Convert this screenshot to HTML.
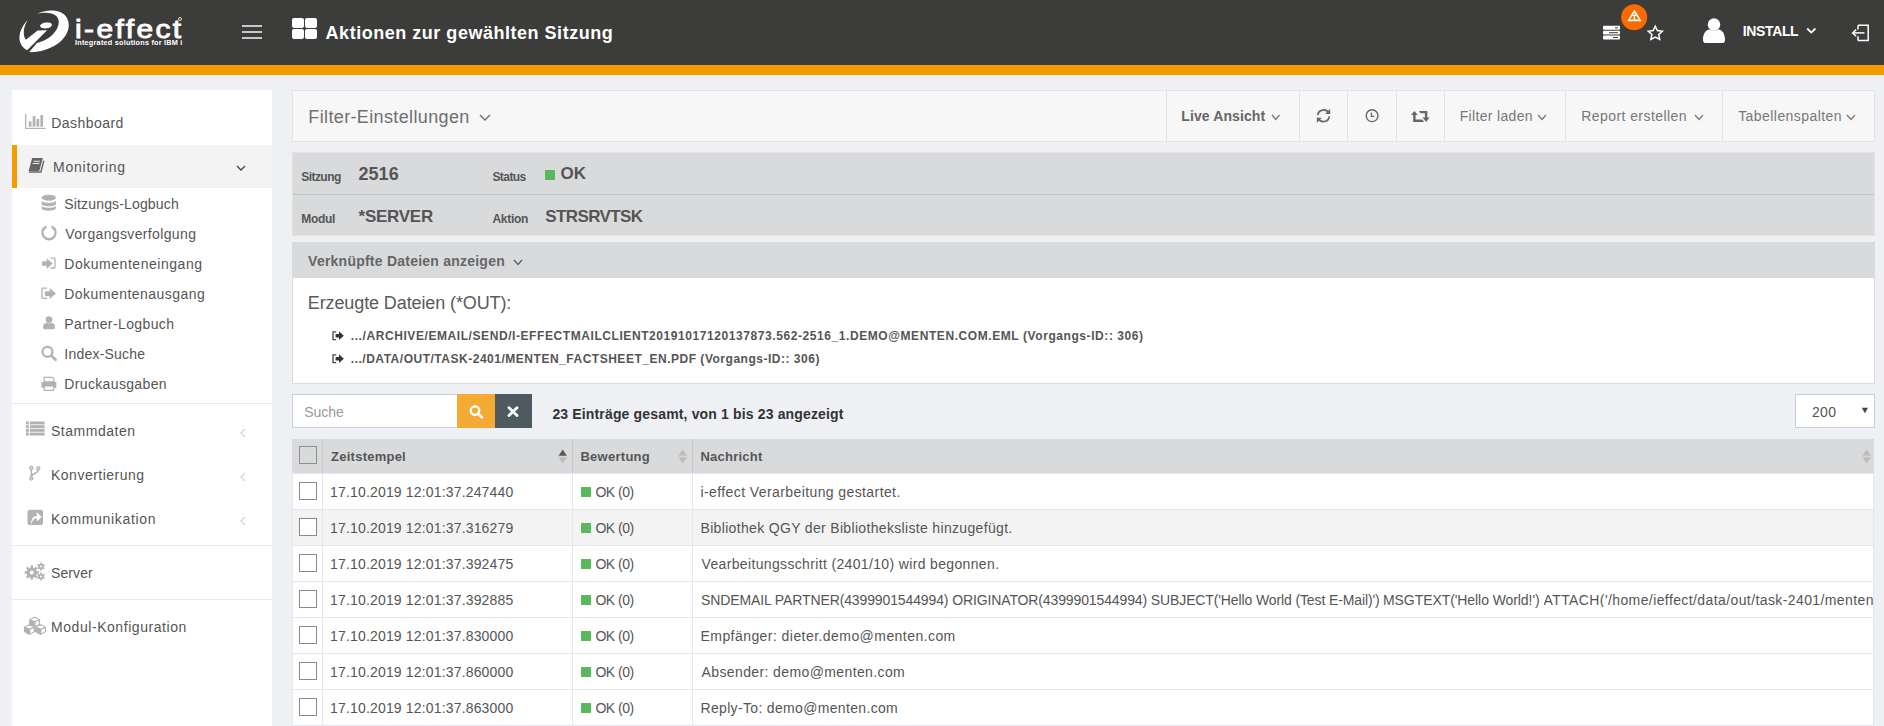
<!DOCTYPE html>
<html><head><meta charset="utf-8"><style>
*{box-sizing:border-box;margin:0;padding:0}
html,body{width:1884px;height:726px;overflow:hidden;background:#eef0f4;font-family:"Liberation Sans",sans-serif;color:#555;position:relative}
.r{position:absolute}
.tx{position:absolute;white-space:nowrap}
svg{position:absolute;overflow:visible}
</style></head><body>
<div class="r" style="left:0px;top:0px;width:1884px;height:65px;background:#3c3c3b"></div>
<div class="r" style="left:0px;top:65px;width:1884px;height:10px;background:#f39c00"></div>
<svg style="left:15px;top:5px" width="60" height="53" viewBox="0 0 822 726"><g fill="#fff"><path d="M300,120 C430,55 650,45 715,185 C780,320 690,480 530,565 C420,625 300,650 195,645 L300,520 C420,490 560,410 595,270 C625,150 520,70 300,120 Z"/><path d="M175,205 C95,280 45,400 65,490 C80,560 130,605 170,618 L440,345 L310,350 L150,475 C105,420 110,300 175,205 Z"/><ellipse cx="425" cy="280" rx="82" ry="40" transform="rotate(-8 425 280)"/></g></svg>
<div class="r" style="left:242px;top:25px;width:20px;height:2px;background:#c8c8c8"></div>
<div class="r" style="left:242px;top:31px;width:20px;height:2px;background:#c8c8c8"></div>
<div class="r" style="left:242px;top:37px;width:20px;height:2px;background:#c8c8c8"></div>
<div class="r" style="left:292px;top:18px;width:12px;height:10px;background:#fff;border-radius:2px"></div>
<div class="r" style="left:305px;top:18px;width:12px;height:10px;background:#fff;border-radius:2px"></div>
<div class="r" style="left:292px;top:29px;width:12px;height:10px;background:#fff;border-radius:2px"></div>
<div class="r" style="left:305px;top:29px;width:12px;height:10px;background:#fff;border-radius:2px"></div>
<svg style="left:1603px;top:25px" width="18" height="15" viewBox="0 0 18 15"><g fill="#fff"><rect x="0" y="0.8" width="17" height="4" rx="0.8"/><rect x="0" y="5.8" width="17" height="3.6" rx="0.8"/><rect x="0" y="10.4" width="17" height="4" rx="0.8"/></g><g fill="#3c3c3b"><rect x="12" y="2.3" width="3" height="1"/><rect x="6" y="7.2" width="9" height="1"/><rect x="10" y="12" width="5" height="1"/></g></svg>
<svg style="left:1620px;top:3px" width="30" height="29" viewBox="0 0 30 29"><circle cx="14.2" cy="14.3" r="13" fill="#ff6a00"/><path d="M14.4,6.6 L21.6,18.2 L7.2,18.2 Z" fill="#fff"/><path d="M14.4,10 L19,16.5 L9.8,16.5 Z" fill="#ff6a00"/><rect x="13.7" y="12.2" width="1.5" height="5" fill="#fff"/><rect x="12.6" y="11.8" width="3.7" height="1.2" fill="#fff"/></svg>
<svg style="left:1647px;top:25px" width="17" height="16" viewBox="0 0 17 16"><path d="M8.3,1.2 L10.4,5.6 L15.3,6.2 L11.7,9.5 L12.7,14.4 L8.3,12 L3.9,14.4 L4.9,9.5 L1.3,6.2 L6.2,5.6 Z" fill="none" stroke="#fff" stroke-width="1.5" stroke-linejoin="miter"/></svg>
<svg style="left:1702px;top:18px" width="24" height="26" viewBox="0 0 24 26"><g fill="#fff"><circle cx="12" cy="6.6" r="6.3"/><path d="M1,22 C1,15 4,12 7.5,11.5 C9,13 15,13 16.5,11.5 C20,12 23,15 23,22 C23,24.5 21.5,25 20,25 L4,25 C2.5,25 1,24.5 1,22 Z"/></g></svg>
<svg style="left:1806px;top:27px" width="11" height="8" viewBox="0 0 11 8"><path d="M1.2,1.5 L5.3,5.6 L9.4,1.5" fill="none" stroke="#fff" stroke-width="1.8"/></svg>
<svg style="left:1851px;top:24px" width="19" height="18" viewBox="0 0 19 18"><g fill="none" stroke="#fff" stroke-width="1.5"><path d="M7,1.3 L17.2,1.3 L17.2,16.4 L7,16.4"/><path d="M7,1.3 L7,5.5 M7,12.2 L7,16.4"/><path d="M2,8.9 L13.5,8.9"/><path d="M5.2,5.6 L1.6,8.9 L5.2,12.2"/></g></svg>
<div class="r" style="left:12px;top:90px;width:260px;height:640px;background:#fff"></div>
<div class="r" style="left:12px;top:145px;width:260px;height:43px;background:#f3f3f3"></div>
<div class="r" style="left:12px;top:145px;width:5px;height:43px;background:#f39c00"></div>
<div class="r" style="left:17px;top:145px;width:1px;height:43px;background:#f8f8f8"></div>
<div class="r" style="left:12px;top:403px;width:260px;height:1px;background:#e9e9e9"></div>
<div class="r" style="left:12px;top:545px;width:260px;height:1px;background:#e9e9e9"></div>
<div class="r" style="left:12px;top:599px;width:260px;height:1px;background:#e9e9e9"></div>
<svg style="left:25px;top:114px" width="21" height="15" viewBox="0 0 21 15"><g fill="#b2b2b2"><rect x="0" y="0" width="1.3" height="15"/><rect x="0" y="13.8" width="20.6" height="1.2"/><rect x="3.8" y="7.3" width="2.7" height="5.4"/><rect x="7.7" y="2.1" width="2.7" height="10.6"/><rect x="11.5" y="4.9" width="2.7" height="7.8"/><rect x="15.4" y="1.0" width="2.7" height="11.7"/></g></svg>
<svg style="left:20px;top:150px" width="30" height="30" viewBox="0 0 30 30"><path d="M12.2,7.9 L22.8,7.9 L19.8,19.6 C19.5,20.5 19,20.9 18.2,20.9 L8.6,20.9 Z" fill="#666"/><path d="M23.9,10.6 L20.9,22 L8.9,22" fill="none" stroke="#666" stroke-width="1.4"/><path d="M13.6,11.2 L19.9,11.2 M12.6,13.5 L19.4,13.5" stroke="#e8e8e8" stroke-width="1.1"/></svg>
<svg style="left:236px;top:165px" width="11" height="7" viewBox="0 0 11 7"><path d="M1,1 L5,5 L9,1" fill="none" stroke="#444" stroke-width="1.3"/></svg>
<svg style="left:41px;top:194px" width="16" height="17" viewBox="0 0 16 17"><g fill="#b2b2b2"><ellipse cx="7.8" cy="3.7" rx="7.1" ry="3"/><path d="M0.7,6.2 C0.7,9.6 14.9,9.6 14.9,6.2 L14.9,10 C14.9,13 0.7,13 0.7,10 Z"/><path d="M0.7,11.6 C0.7,14.6 14.9,14.6 14.9,11.6 L14.9,14 C14.9,17.6 0.7,17.6 0.7,14 Z"/></g></svg>
<svg style="left:41px;top:225px" width="16" height="16" viewBox="0 0 16 16"><path d="M10.6,1.6 A6.6,6.6 0 1 1 5.4,1.6" fill="none" stroke="#b2b2b2" stroke-width="2.3"/></svg>
<svg style="left:38px;top:252px" width="22" height="50" viewBox="0 0 22 50"><g fill="#b2b2b2"><rect x="4.1" y="9.3" width="5" height="4.5"/><path d="M8.6,6.2 L14.8,11.5 L8.6,16.9 Z"/><rect x="6.9" y="39.3" width="5.2" height="4.8"/><path d="M11.7,35.9 L17.9,41.4 L11.7,46.9 Z"/></g><g fill="none" stroke="#b2b2b2" stroke-width="1.3"><path d="M12.4,6.1 L16.3,6.1 Q17,6.1 17,6.8 L17,15.3 Q17,16 16.3,16 L12.4,16"/><path d="M9,36.1 L4.7,36.1 Q4,36.1 4,36.8 L4,45.6 Q4,46.3 4.7,46.3 L9,46.3"/></g></svg>
<svg style="left:42px;top:316px" width="15" height="14" viewBox="0 0 15 14"><g fill="#b2b2b2"><circle cx="7" cy="3.6" r="3.4"/><path d="M1,11.5 C1,8.5 2.6,7 4.5,6.8 C5.5,7.6 8.5,7.6 9.5,6.8 C11.4,7 13,8.5 13,11.5 C13,12.6 12.4,13.2 11.4,13.2 L2.6,13.2 C1.6,13.2 1,12.6 1,11.5 Z"/></g></svg>
<svg style="left:41px;top:345px" width="16" height="17" viewBox="0 0 16 17"><circle cx="6.5" cy="6.8" r="5" fill="none" stroke="#b2b2b2" stroke-width="2.2"/><path d="M10.3,10.6 L14.6,14.8" stroke="#b2b2b2" stroke-width="2.6" stroke-linecap="round"/></svg>
<svg style="left:41px;top:377px" width="16" height="14" viewBox="0 0 16 14"><g fill="#b2b2b2"><path d="M3.2,0.4 L11.5,0.4 L13,2 L13,5 L3.2,5 Z" fill="none" stroke="#b2b2b2" stroke-width="1.3"/><rect x="0.4" y="5" width="15" height="6" rx="1.2"/><rect x="3.2" y="9" width="9.5" height="4.4" fill="#fff" stroke="#b2b2b2" stroke-width="1.2"/></g></svg>
<svg style="left:26px;top:421px" width="19" height="16" viewBox="0 0 19 16"><g fill="#b2b2b2"><rect x="0" y="0.5" width="2.9" height="2.9"/><rect x="3.9" y="0.5" width="14.7" height="2.9"/><rect x="0" y="4.2" width="2.9" height="2.9"/><rect x="3.9" y="4.2" width="14.7" height="2.9"/><rect x="0" y="7.9" width="2.9" height="2.9"/><rect x="3.9" y="7.9" width="14.7" height="2.9"/><rect x="0" y="11.6" width="2.9" height="2.9"/><rect x="3.9" y="11.6" width="14.7" height="2.9"/></g></svg>
<svg style="left:29px;top:466px" width="12" height="15" viewBox="0 0 12 15"><g fill="none" stroke="#b2b2b2" stroke-width="1.5"><circle cx="2.3" cy="2" r="1.4"/><circle cx="9.3" cy="2.5" r="1.4"/><circle cx="2.3" cy="12.6" r="1.4"/><path d="M2.3,3.4 L2.3,11.2"/><path d="M9.3,3.9 C9.3,7.5 2.6,7 2.4,10.8"/></g></svg>
<svg style="left:27px;top:509px" width="17" height="17" viewBox="0 0 17 17"><rect x="0.5" y="0.8" width="15.5" height="15.2" rx="2.6" fill="#b2b2b2"/><path d="M4.3,15.6 C3.6,10.2 6.3,6.9 9.8,6.9 L9.8,3 L14.6,7.9 L9.8,12.5 L9.8,9.3 C7.4,9.3 5.4,11.2 4.3,15.6 Z" fill="#fff"/></svg>
<svg style="left:25px;top:562px" width="21" height="19" viewBox="0 0 21 19"><g fill="#b2b2b2"><circle cx="6.8" cy="10.5" r="5.2"/><rect x="5.6" y="3.3" width="2.4" height="2.6" transform="rotate(0 6.8 10.5)"/><rect x="5.6" y="3.3" width="2.4" height="2.6" transform="rotate(45 6.8 10.5)"/><rect x="5.6" y="3.3" width="2.4" height="2.6" transform="rotate(90 6.8 10.5)"/><rect x="5.6" y="3.3" width="2.4" height="2.6" transform="rotate(135 6.8 10.5)"/><rect x="5.6" y="3.3" width="2.4" height="2.6" transform="rotate(180 6.8 10.5)"/><rect x="5.6" y="3.3" width="2.4" height="2.6" transform="rotate(225 6.8 10.5)"/><rect x="5.6" y="3.3" width="2.4" height="2.6" transform="rotate(270 6.8 10.5)"/><rect x="5.6" y="3.3" width="2.4" height="2.6" transform="rotate(315 6.8 10.5)"/><circle cx="16" cy="4.6" r="2.8"/><rect x="15.2" y="0.5" width="1.6" height="1.6" transform="rotate(0 16 4.6)"/><rect x="15.2" y="0.5" width="1.6" height="1.6" transform="rotate(60 16 4.6)"/><rect x="15.2" y="0.5" width="1.6" height="1.6" transform="rotate(120 16 4.6)"/><rect x="15.2" y="0.5" width="1.6" height="1.6" transform="rotate(180 16 4.6)"/><rect x="15.2" y="0.5" width="1.6" height="1.6" transform="rotate(240 16 4.6)"/><rect x="15.2" y="0.5" width="1.6" height="1.6" transform="rotate(300 16 4.6)"/><circle cx="16" cy="14.5" r="2.8"/><rect x="15.2" y="10.4" width="1.6" height="1.6" transform="rotate(0 16 14.5)"/><rect x="15.2" y="10.4" width="1.6" height="1.6" transform="rotate(60 16 14.5)"/><rect x="15.2" y="10.4" width="1.6" height="1.6" transform="rotate(120 16 14.5)"/><rect x="15.2" y="10.4" width="1.6" height="1.6" transform="rotate(180 16 14.5)"/><rect x="15.2" y="10.4" width="1.6" height="1.6" transform="rotate(240 16 14.5)"/><rect x="15.2" y="10.4" width="1.6" height="1.6" transform="rotate(300 16 14.5)"/></g><circle cx="6.8" cy="10.5" r="1.9" fill="#fff"/><circle cx="16" cy="4.6" r="1" fill="#fff"/><circle cx="16" cy="14.5" r="1" fill="#fff"/></svg>
<svg style="left:20px;top:612px" width="30" height="26" viewBox="0 0 30 26"><path d="M14.6,4.6 L20.1,7.3999999999999995 L20.1,12.600000000000001 L14.6,15.4 L9.1,12.600000000000001 L9.1,7.3999999999999995 Z" fill="#b2b2b2"/><path d="M14.6,6.0 L18.5,7.3999999999999995 L14.6,8.899999999999999 L10.7,7.3999999999999995 Z" fill="#fff"/><path d="M15.5,10.0 L18.900000000000002,8.799999999999999 L18.900000000000002,12.000000000000002 L15.5,13.9 Z" fill="#fff"/><path d="M9.4,12.1 L14.9,14.899999999999999 L14.9,20.099999999999998 L9.4,22.9 L3.9,20.099999999999998 L3.9,14.899999999999999 Z" fill="#b2b2b2"/><path d="M9.4,13.5 L13.3,14.899999999999999 L9.4,16.4 L5.5,14.899999999999999 Z" fill="#fff"/><path d="M10.3,17.5 L13.700000000000001,16.299999999999997 L13.700000000000001,19.499999999999996 L10.3,21.4 Z" fill="#fff"/><path d="M20.5,12.1 L26,14.899999999999999 L26,20.099999999999998 L20.5,22.9 L15,20.099999999999998 L15,14.899999999999999 Z" fill="#b2b2b2"/><path d="M20.5,13.5 L24.4,14.899999999999999 L20.5,16.4 L16.6,14.899999999999999 Z" fill="#fff"/><path d="M21.4,17.5 L24.8,16.299999999999997 L24.8,19.499999999999996 L21.4,21.4 Z" fill="#fff"/></svg>
<svg style="left:239px;top:428px" width="8" height="10" viewBox="0 0 8 10"><path d="M6,1 L2,5 L6,9" fill="none" stroke="#d4d4d4" stroke-width="1.3"/></svg>
<svg style="left:239px;top:472px" width="8" height="10" viewBox="0 0 8 10"><path d="M6,1 L2,5 L6,9" fill="none" stroke="#d4d4d4" stroke-width="1.3"/></svg>
<svg style="left:239px;top:516px" width="8" height="10" viewBox="0 0 8 10"><path d="M6,1 L2,5 L6,9" fill="none" stroke="#d4d4d4" stroke-width="1.3"/></svg>
<div class="r" style="left:292px;top:90px;width:1583px;height:52px;background:#f7f7f7;border:1px solid #e3e3e3"></div>
<div class="r" style="left:1166px;top:91px;width:1px;height:50px;background:#e2e2e2"></div>
<div class="r" style="left:1299px;top:91px;width:1px;height:50px;background:#e2e2e2"></div>
<div class="r" style="left:1347px;top:91px;width:1px;height:50px;background:#e2e2e2"></div>
<div class="r" style="left:1396px;top:91px;width:1px;height:50px;background:#e2e2e2"></div>
<div class="r" style="left:1444px;top:91px;width:1px;height:50px;background:#e2e2e2"></div>
<div class="r" style="left:1565px;top:91px;width:1px;height:50px;background:#e2e2e2"></div>
<div class="r" style="left:1722px;top:91px;width:1px;height:50px;background:#e2e2e2"></div>
<svg style="left:479px;top:113.5px" width="12" height="7" viewBox="0 0 12 7"><path d="M1,1 L6.0,6 L11,1" fill="none" stroke="#6f6f6f" stroke-width="1.4"/></svg>
<svg style="left:1271px;top:113.5px" width="9.5" height="6.5" viewBox="0 0 9.5 6.5"><path d="M1,1 L4.75,5.5 L8.5,1" fill="none" stroke="#777" stroke-width="1.3"/></svg>
<svg style="left:1537px;top:113.5px" width="10" height="6.5" viewBox="0 0 10 6.5"><path d="M1,1 L5.0,5.5 L9,1" fill="none" stroke="#777" stroke-width="1.3"/></svg>
<svg style="left:1694px;top:113.5px" width="10" height="6.5" viewBox="0 0 10 6.5"><path d="M1,1 L5.0,5.5 L9,1" fill="none" stroke="#777" stroke-width="1.3"/></svg>
<svg style="left:1846px;top:113.5px" width="10" height="6.5" viewBox="0 0 10 6.5"><path d="M1,1 L5.0,5.5 L9,1" fill="none" stroke="#777" stroke-width="1.3"/></svg>
<svg style="left:1316px;top:108px" width="16" height="16" viewBox="0 0 16 16"><g fill="none" stroke="#666" stroke-width="1.7"><path d="M1.7,7.2 A5.9,5.9 0 0 1 12.9,5.4"/><path d="M13.3,8.4 A5.9,5.9 0 0 1 2.1,10.2"/></g><g fill="#666"><path d="M14.2,0.8 L14.2,6 L9.2,6 Z"/><path d="M0.8,15 L0.8,9.8 L5.8,9.8 Z"/></g></svg>
<svg style="left:1364px;top:108px" width="16" height="16" viewBox="0 0 16 16"><circle cx="8.1" cy="7.7" r="5.9" fill="none" stroke="#666" stroke-width="1.4"/><path d="M7.4,4.5 L7.4,8.4 L10.3,8.4" fill="none" stroke="#666" stroke-width="1.3"/></svg>
<svg style="left:1410px;top:110px" width="22" height="13" viewBox="0 0 22 13"><g fill="#666"><path d="M1.1,5 L4.4,0.9 L7.7,5 L5.6,5 L5.6,9.5 L12.3,9.5 L14,11.9 L3.2,11.9 L3.2,5 Z"/><path d="M8.9,0.9 L17.3,0.9 L17.3,7.6 L19.6,7.6 L16.1,11.9 L12.6,7.6 L14.9,7.6 L14.9,3.3 L10.6,3.3 Z"/></g></svg>
<div class="r" style="left:292px;top:152px;width:1583px;height:84px;background:#d9dadc;border:1px solid #e6e4d4"></div>
<div class="r" style="left:293px;top:194px;width:1581px;height:1px;background:#c2c3c5"></div>
<div class="r" style="left:545px;top:170px;width:10px;height:10px;background:#5cb85c"></div>
<div class="r" style="left:292px;top:242px;width:1583px;height:36px;background:#d9dadc"></div>
<svg style="left:513px;top:258.5px" width="10" height="6.5" viewBox="0 0 10 6.5"><path d="M1,1 L5.0,5.5 L9,1" fill="none" stroke="#5f5f5f" stroke-width="1.3"/></svg>
<div class="r" style="left:292px;top:278px;width:1583px;height:106px;background:#fff;border:1px solid #dcdcdc;border-top:none"></div>
<svg style="left:332px;top:331px" width="13" height="10" viewBox="0 0 13 10"><path d="M4.2,0.8 L1,0.8 L1,8.6 L4.2,8.6" fill="none" stroke="#444" stroke-width="1.3"/><path d="M3.6,3 L7,3 L7,0.3 L11.8,4.7 L7,9.1 L7,6.4 L3.6,6.4 Z" fill="#333"/></svg>
<svg style="left:332px;top:354px" width="13" height="10" viewBox="0 0 13 10"><path d="M4.2,0.8 L1,0.8 L1,8.6 L4.2,8.6" fill="none" stroke="#444" stroke-width="1.3"/><path d="M3.6,3 L7,3 L7,0.3 L11.8,4.7 L7,9.1 L7,6.4 L3.6,6.4 Z" fill="#333"/></svg>
<div class="r" style="left:292px;top:394px;width:166px;height:34px;background:#fff;border:1px solid #c6cfdc;border-right:none"></div>
<div class="r" style="left:457px;top:394px;width:38px;height:34px;background:#f4ab33"></div>
<div class="r" style="left:495px;top:394px;width:37px;height:34px;background:#4f5960"></div>
<svg style="left:469px;top:405px" width="16" height="14" viewBox="0 0 16 14"><circle cx="6" cy="5.6" r="4.3" fill="none" stroke="#fff" stroke-width="2.2"/><path d="M9.2,8.8 L12.8,12.3" stroke="#fff" stroke-width="2.6" stroke-linecap="round"/></svg>
<svg style="left:507px;top:406px" width="12" height="11" viewBox="0 0 12 11"><path d="M2,1.8 L10,9.5 M10,1.8 L2,9.5" stroke="#fff" stroke-width="2.8" stroke-linecap="round"/></svg>
<div class="r" style="left:1795px;top:394px;width:80px;height:34px;background:#fff;border:1px solid #c6cfdc"></div>
<svg style="left:1861px;top:407px" width="8" height="7" viewBox="0 0 8 7"><path d="M0.8,0.8 L7,0.8 L3.9,6.3 Z" fill="#444"/></svg>
<div class="r" style="left:292px;top:439px;width:1582px;height:34px;background:#d9dadc"></div>
<div class="r" style="left:322px;top:439px;width:1px;height:34px;background:#c9cacc"></div>
<div class="r" style="left:572px;top:439px;width:1px;height:34px;background:#c9cacc"></div>
<div class="r" style="left:692px;top:439px;width:1px;height:34px;background:#c9cacc"></div>
<div class="r" style="left:292px;top:473px;width:1582px;height:36px;background:#fff;border-top:1px solid #e4e8ee"></div>
<div class="r" style="left:292px;top:509px;width:1582px;height:36px;background:#f3f3f3;border-top:1px solid #e4e8ee"></div>
<div class="r" style="left:292px;top:545px;width:1582px;height:36px;background:#fff;border-top:1px solid #e4e8ee"></div>
<div class="r" style="left:292px;top:581px;width:1582px;height:36px;background:#fff;border-top:1px solid #e4e8ee"></div>
<div class="r" style="left:292px;top:617px;width:1582px;height:36px;background:#fff;border-top:1px solid #e4e8ee"></div>
<div class="r" style="left:292px;top:653px;width:1582px;height:36px;background:#fff;border-top:1px solid #e4e8ee"></div>
<div class="r" style="left:292px;top:689px;width:1582px;height:36px;background:#fff;border-top:1px solid #e4e8ee"></div>
<div class="r" style="left:292px;top:725px;width:1582px;height:1px;background:#e4e8ee"></div>
<div class="r" style="left:322px;top:473px;width:1px;height:260px;background:#e4e8ee"></div>
<div class="r" style="left:572px;top:473px;width:1px;height:260px;background:#e4e8ee"></div>
<div class="r" style="left:692px;top:473px;width:1px;height:260px;background:#e4e8ee"></div>
<div class="r" style="left:292px;top:473px;width:1px;height:260px;background:#e4e8ee"></div>
<div class="r" style="left:1873px;top:473px;width:1px;height:260px;background:#e4e8ee"></div>
<div class="r" style="left:299px;top:446px;width:18px;height:18px;border:1px solid #8e8e8e;background:#d9dadc"></div>
<div class="r" style="left:299px;top:482px;width:18px;height:18px;border:1px solid #8a8a8a;background:#fff"></div>
<div class="r" style="left:581px;top:487px;width:10px;height:10px;background:#5cb85c"></div>
<div class="r" style="left:299px;top:518px;width:18px;height:18px;border:1px solid #8a8a8a;background:#fff"></div>
<div class="r" style="left:581px;top:523px;width:10px;height:10px;background:#5cb85c"></div>
<div class="r" style="left:299px;top:554px;width:18px;height:18px;border:1px solid #8a8a8a;background:#fff"></div>
<div class="r" style="left:581px;top:559px;width:10px;height:10px;background:#5cb85c"></div>
<div class="r" style="left:299px;top:590px;width:18px;height:18px;border:1px solid #8a8a8a;background:#fff"></div>
<div class="r" style="left:581px;top:595px;width:10px;height:10px;background:#5cb85c"></div>
<div class="r" style="left:299px;top:626px;width:18px;height:18px;border:1px solid #8a8a8a;background:#fff"></div>
<div class="r" style="left:581px;top:631px;width:10px;height:10px;background:#5cb85c"></div>
<div class="r" style="left:299px;top:662px;width:18px;height:18px;border:1px solid #8a8a8a;background:#fff"></div>
<div class="r" style="left:581px;top:667px;width:10px;height:10px;background:#5cb85c"></div>
<div class="r" style="left:299px;top:698px;width:18px;height:18px;border:1px solid #8a8a8a;background:#fff"></div>
<div class="r" style="left:581px;top:703px;width:10px;height:10px;background:#5cb85c"></div>
<svg style="left:557.5px;top:449px" width="10" height="16" viewBox="0 0 10 16"><path d="M0.5,6.8 L4.7,0.5 L8.9,6.8 Z" fill="#5a5a5a"/><path d="M0.5,8.2 L4.7,14.5 L8.9,8.2 Z" fill="#bdbdbd"/></svg>
<svg style="left:678px;top:449px" width="10" height="16" viewBox="0 0 10 16"><path d="M0.5,6.8 L4.7,0.5 L8.9,6.8 Z" fill="#bdbdbd"/><path d="M0.5,8.2 L4.7,14.5 L8.9,8.2 Z" fill="#bdbdbd"/></svg>
<svg style="left:1861.5px;top:449px" width="10" height="16" viewBox="0 0 10 16"><path d="M0.5,6.8 L4.7,0.5 L8.9,6.8 Z" fill="#bdbdbd"/><path d="M0.5,8.2 L4.7,14.5 L8.9,8.2 Z" fill="#bdbdbd"/></svg>
<div class="tx" style="left:325.6px;top:23.6px;font-size:18px;line-height:18px;font-weight:700;color:#fff;letter-spacing:0.521px">Aktionen zur gewählten Sitzung</div>
<div class="tx" style="left:1742.8px;top:24.0px;font-size:14px;line-height:14px;font-weight:700;color:#fff;letter-spacing:-0.367px">INSTALL</div>
<div class="tx" style="left:51.3px;top:116.0px;font-size:14px;line-height:14px;font-weight:400;color:#555;letter-spacing:0.45px">Dashboard</div>
<div class="tx" style="left:53.1px;top:160.0px;font-size:14px;line-height:14px;font-weight:400;color:#555;letter-spacing:0.744px">Monitoring</div>
<div class="tx" style="left:64.3px;top:196.9px;font-size:14px;line-height:14px;font-weight:400;color:#555;letter-spacing:0.153px">Sitzungs-Logbuch</div>
<div class="tx" style="left:65.3px;top:226.9px;font-size:14px;line-height:14px;font-weight:400;color:#555;letter-spacing:0.359px">Vorgangsverfolgung</div>
<div class="tx" style="left:64.3px;top:256.9px;font-size:14px;line-height:14px;font-weight:400;color:#555;letter-spacing:0.531px">Dokumenteneingang</div>
<div class="tx" style="left:64.3px;top:286.9px;font-size:14px;line-height:14px;font-weight:400;color:#555;letter-spacing:0.462px">Dokumentenausgang</div>
<div class="tx" style="left:64.3px;top:316.9px;font-size:14px;line-height:14px;font-weight:400;color:#555;letter-spacing:0.386px">Partner-Logbuch</div>
<div class="tx" style="left:64.3px;top:346.9px;font-size:14px;line-height:14px;font-weight:400;color:#555;letter-spacing:0.22px">Index-Suche</div>
<div class="tx" style="left:64.3px;top:376.9px;font-size:14px;line-height:14px;font-weight:400;color:#555;letter-spacing:0.35px">Druckausgaben</div>
<div class="tx" style="left:51.0px;top:424.1px;font-size:14px;line-height:14px;font-weight:400;color:#555;letter-spacing:0.522px">Stammdaten</div>
<div class="tx" style="left:51.0px;top:468.1px;font-size:14px;line-height:14px;font-weight:400;color:#555;letter-spacing:0.492px">Konvertierung</div>
<div class="tx" style="left:51.0px;top:512.1px;font-size:14px;line-height:14px;font-weight:400;color:#555;letter-spacing:0.667px">Kommunikation</div>
<div class="tx" style="left:51.0px;top:566.1px;font-size:14px;line-height:14px;font-weight:400;color:#555;letter-spacing:0.1px">Server</div>
<div class="tx" style="left:51.0px;top:620.1px;font-size:14px;line-height:14px;font-weight:400;color:#555;letter-spacing:0.556px">Modul-Konfiguration</div>
<div class="tx" style="left:308.3px;top:107.5px;font-size:18px;line-height:18px;font-weight:400;color:#6f6f6f;letter-spacing:0.368px">Filter-Einstellungen</div>
<div class="tx" style="left:1181.3px;top:108.9px;font-size:14px;line-height:14px;font-weight:700;color:#666;letter-spacing:0.1px">Live Ansicht</div>
<div class="tx" style="left:1459.7px;top:108.9px;font-size:14px;line-height:14px;font-weight:400;color:#777;letter-spacing:0.336px">Filter laden</div>
<div class="tx" style="left:1581.2px;top:108.9px;font-size:14px;line-height:14px;font-weight:400;color:#777;letter-spacing:0.433px">Report erstellen</div>
<div class="tx" style="left:1738.2px;top:108.9px;font-size:14px;line-height:14px;font-weight:400;color:#777;letter-spacing:0.436px">Tabellenspalten</div>
<div class="tx" style="left:301.3px;top:171.0px;font-size:12px;line-height:12px;font-weight:700;color:#555;letter-spacing:-0.567px">Sitzung</div>
<div class="tx" style="left:358.6px;top:164.5px;font-size:18px;line-height:18px;font-weight:700;color:#555;letter-spacing:0.0px">2516</div>
<div class="tx" style="left:492.4px;top:171.0px;font-size:12px;line-height:12px;font-weight:700;color:#555;letter-spacing:-0.56px">Status</div>
<div class="tx" style="left:560.6px;top:165.4px;font-size:17px;line-height:17px;font-weight:700;color:#555;letter-spacing:-0.1px">OK</div>
<div class="tx" style="left:301.3px;top:212.6px;font-size:12px;line-height:12px;font-weight:700;color:#555;letter-spacing:-0.3px">Modul</div>
<div class="tx" style="left:358.6px;top:207.5px;font-size:17px;line-height:17px;font-weight:700;color:#555;letter-spacing:-0.267px">*SERVER</div>
<div class="tx" style="left:492.4px;top:212.6px;font-size:12px;line-height:12px;font-weight:700;color:#555;letter-spacing:-0.26px">Aktion</div>
<div class="tx" style="left:545.3px;top:207.5px;font-size:17px;line-height:17px;font-weight:700;color:#555;letter-spacing:-0.612px">STRSRVTSK</div>
<div class="tx" style="left:308.1px;top:253.9px;font-size:14px;line-height:14px;font-weight:700;color:#666;letter-spacing:0.231px">Verknüpfte Dateien anzeigen</div>
<div class="tx" style="left:307.8px;top:294.1px;font-size:18px;line-height:18px;font-weight:400;color:#5a5a5a;letter-spacing:-0.109px">Erzeugte Dateien (*OUT):</div>
<div class="tx" style="left:350.8px;top:329.7px;font-size:12px;line-height:12px;font-weight:700;color:#555;letter-spacing:0.576px">.../ARCHIVE/EMAIL/SEND/I-EFFECTMAILCLIENT20191017120137873.562-2516_1.DEMO@MENTEN.COM.EML (Vorgangs-ID:: 306)</div>
<div class="tx" style="left:350.8px;top:352.8px;font-size:12px;line-height:12px;font-weight:700;color:#555;letter-spacing:0.515px">.../DATA/OUT/TASK-2401/MENTEN_FACTSHEET_EN.PDF (Vorgangs-ID:: 306)</div>
<div class="tx" style="left:304.3px;top:405.1px;font-size:14px;line-height:14px;font-weight:400;color:#999;letter-spacing:-0.075px">Suche</div>
<div class="tx" style="left:552.4px;top:407.3px;font-size:14px;line-height:14px;font-weight:700;color:#333;letter-spacing:0.154px">23 Einträge gesamt, von 1 bis 23 angezeigt</div>
<div class="tx" style="left:1812.0px;top:404.9px;font-size:14px;line-height:14px;font-weight:400;color:#555;letter-spacing:0.3px">200</div>
<div class="tx" style="left:331.1px;top:449.8px;font-size:13px;line-height:13px;font-weight:700;color:#555;letter-spacing:0.24px">Zeitstempel</div>
<div class="tx" style="left:580.4px;top:449.8px;font-size:13px;line-height:13px;font-weight:700;color:#555;letter-spacing:0.275px">Bewertung</div>
<div class="tx" style="left:700.5px;top:449.8px;font-size:13px;line-height:13px;font-weight:700;color:#555;letter-spacing:0.225px">Nachricht</div>
<div class="tx" style="left:330.1px;top:484.9px;font-size:14px;line-height:14px;font-weight:400;color:#555;letter-spacing:0.164px">17.10.2019 12:01:37.247440</div>
<div class="tx" style="left:595.4px;top:484.9px;font-size:14px;line-height:14px;font-weight:400;color:#555;letter-spacing:-0.48px">OK (0)</div>
<div class="tx" style="left:700.5px;top:484.9px;font-size:14px;line-height:14px;font-weight:400;color:#555;letter-spacing:0.403px">i-effect Verarbeitung gestartet.</div>
<div class="tx" style="left:330.1px;top:520.9px;font-size:14px;line-height:14px;font-weight:400;color:#555;letter-spacing:0.164px">17.10.2019 12:01:37.316279</div>
<div class="tx" style="left:595.4px;top:520.9px;font-size:14px;line-height:14px;font-weight:400;color:#555;letter-spacing:-0.48px">OK (0)</div>
<div class="tx" style="left:700.5px;top:520.9px;font-size:14px;line-height:14px;font-weight:400;color:#555;letter-spacing:0.33px">Bibliothek QGY der Bibliotheksliste hinzugefügt.</div>
<div class="tx" style="left:330.1px;top:556.9px;font-size:14px;line-height:14px;font-weight:400;color:#555;letter-spacing:0.164px">17.10.2019 12:01:37.392475</div>
<div class="tx" style="left:595.4px;top:556.9px;font-size:14px;line-height:14px;font-weight:400;color:#555;letter-spacing:-0.48px">OK (0)</div>
<div class="tx" style="left:701.5px;top:556.9px;font-size:14px;line-height:14px;font-weight:400;color:#555;letter-spacing:0.349px">Vearbeitungsschritt (2401/10) wird begonnen.</div>
<div class="tx" style="left:330.1px;top:592.9px;font-size:14px;line-height:14px;font-weight:400;color:#555;letter-spacing:0.164px">17.10.2019 12:01:37.392885</div>
<div class="tx" style="left:595.4px;top:592.9px;font-size:14px;line-height:14px;font-weight:400;color:#555;letter-spacing:-0.48px">OK (0)</div>
<div class="tx" style="left:701px;top:592.9px;font-size:14px;line-height:14px;color:#555;letter-spacing:-0.12px">SNDEMAIL PARTNER(4399901544994) ORIGINATOR(4399901544994) SUBJECT(&#x27;Hello World (Test E-Mail)&#x27;)</div>
<div class="tx" style="left:1383px;top:592.9px;font-size:14px;line-height:14px;color:#555;letter-spacing:-0.076px">MSGTEXT(&#x27;Hello World!&#x27;)</div>
<div class="tx" style="left:1543.5px;top:592.9px;font-size:14px;line-height:14px;color:#555;letter-spacing:0.4px;width:330px;overflow:hidden">ATTACH(&#x27;/home/ieffect/data/out/task-2401/menten_factsheet_en.pdf&#x27;)</div>
<div class="tx" style="left:330.1px;top:628.9px;font-size:14px;line-height:14px;font-weight:400;color:#555;letter-spacing:0.164px">17.10.2019 12:01:37.830000</div>
<div class="tx" style="left:595.4px;top:628.9px;font-size:14px;line-height:14px;font-weight:400;color:#555;letter-spacing:-0.48px">OK (0)</div>
<div class="tx" style="left:700.5px;top:628.9px;font-size:14px;line-height:14px;font-weight:400;color:#555;letter-spacing:0.441px">Empfänger: dieter.demo@menten.com</div>
<div class="tx" style="left:330.1px;top:664.9px;font-size:14px;line-height:14px;font-weight:400;color:#555;letter-spacing:0.164px">17.10.2019 12:01:37.860000</div>
<div class="tx" style="left:595.4px;top:664.9px;font-size:14px;line-height:14px;font-weight:400;color:#555;letter-spacing:-0.48px">OK (0)</div>
<div class="tx" style="left:701.5px;top:664.9px;font-size:14px;line-height:14px;font-weight:400;color:#555;letter-spacing:0.387px">Absender: demo@menten.com</div>
<div class="tx" style="left:330.1px;top:700.9px;font-size:14px;line-height:14px;font-weight:400;color:#555;letter-spacing:0.164px">17.10.2019 12:01:37.863000</div>
<div class="tx" style="left:595.4px;top:700.9px;font-size:14px;line-height:14px;font-weight:400;color:#555;letter-spacing:-0.48px">OK (0)</div>
<div class="tx" style="left:700.5px;top:700.9px;font-size:14px;line-height:14px;font-weight:400;color:#555;letter-spacing:0.333px">Reply-To: demo@menten.com</div>
<div class="tx" style="left:74.5px;top:15.5px;font-size:26px;line-height:26px;font-weight:400;-webkit-text-stroke:0.9px #fff;color:#fff;letter-spacing:2.1px;transform:scaleX(1.15);transform-origin:0 0">i-effect</div>
<div class="tx" style="left:75px;top:40.1px;font-size:6.4px;line-height:6.4px;font-weight:700;color:#fff;letter-spacing:0.2px;transform:scaleX(1.14);transform-origin:0 0">Integrated solutions for IBM i</div>
<div class="r" style="left:177.5px;top:16.5px;width:4px;height:4px;border:0.7px solid #ddd;border-radius:50%"></div>
</body></html>
